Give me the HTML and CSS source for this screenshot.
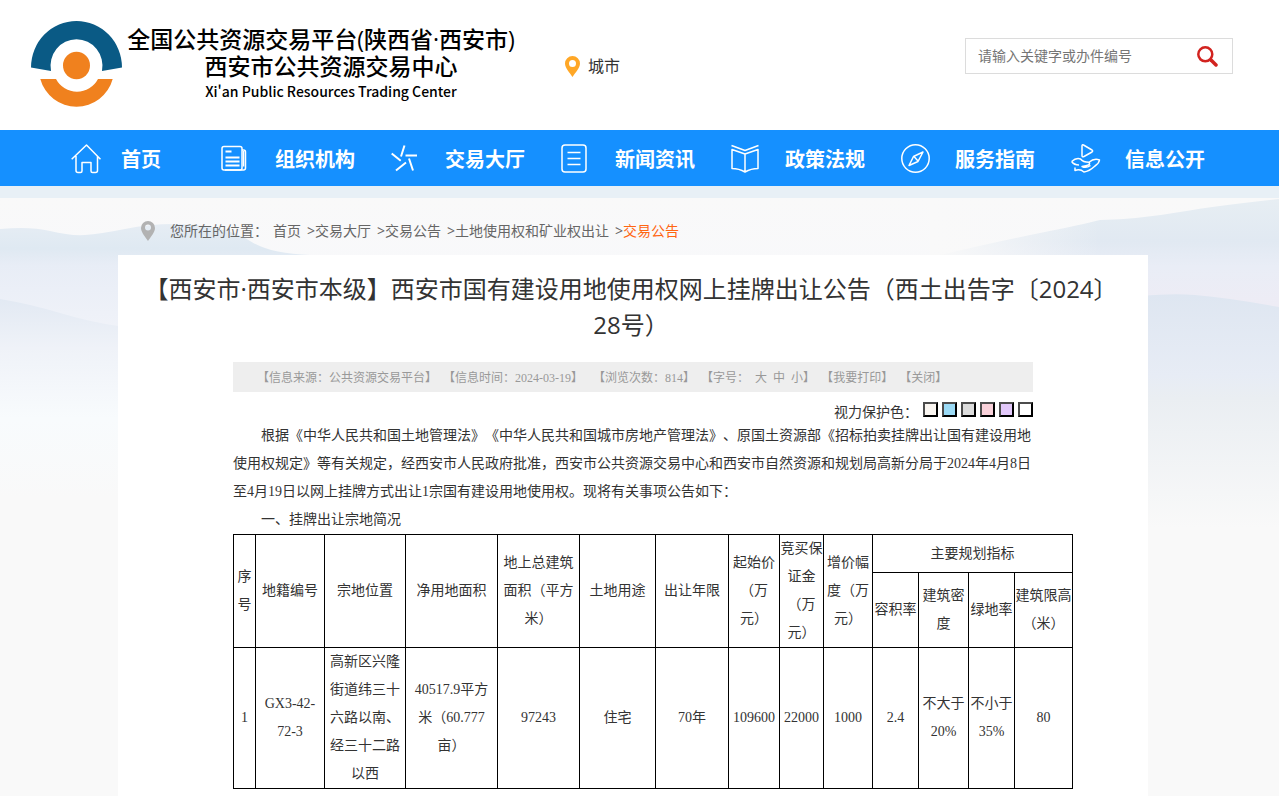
FILE: index.html
```html
<!DOCTYPE html>
<html lang="zh-CN">
<head>
<meta charset="utf-8">
<meta name="viewport" content="width=device-width, initial-scale=1">
<title>西安市公共资源交易中心</title>
<link rel="stylesheet" href="styles.css">
</head>
<body>
<header class="header">
  <div class="brand">
    <svg class="brand-mark" width="91" height="86" viewBox="0 0 91 86" aria-hidden="true">
      <path fill="#0a5a85" d="M0 46.500A45.500 46.500 0 0 1 91 46.500L71 50A26 26.500 0 1 0 20 50Z"/>
      <ellipse fill="#f0811e" cx="45.500" cy="44.500" rx="13.500" ry="13.700"/>
      <path fill="#f0811e" d="M9.300 58H25A23.700 23.700 0 0 0 67 58H81.700A37.500 37.500 0 0 1 9.300 58Z"/>
    </svg>
    <div class="brand-text">
      <div class="brand-platform">全国公共资源交易平台(陕西省·西安市)</div>
      <div class="brand-center">西安市公共资源交易中心</div>
      <div class="brand-en">Xi'an Public Resources Trading Center</div>
    </div>
  </div>
  <a class="city" href="#">
    <svg width="15" height="21" viewBox="0 0 15 21" aria-hidden="true"><path fill="#ffa726" fill-rule="evenodd" d="M7.500 0A7.500 7.500 0 0 0 0 7.500C0 12 5 17 7.500 21C10 17 15 12 15 7.500A7.500 7.500 0 0 0 7.500 0ZM7.500 4a3.500 3.500 0 1 1 0 7a3.500 3.500 0 0 1 0-7Z"/></svg>
    <span>城市</span>
  </a>
  <form class="search">
    <input class="search-input" type="text" aria-label="搜索" placeholder="请输入关键字或办件编号">
    <button class="search-button" type="button" aria-label="搜索">
      <svg width="21" height="21" viewBox="0 0 21 21" fill="none" stroke="#d2231f" aria-hidden="true"><circle cx="8.300" cy="8.300" r="7" stroke-width="2.500"/><path stroke-width="3.500" stroke-linecap="round" d="M14 14l5 5"/></svg>
    </button>
  </form>
</header>

<nav class="nav">
  <a class="nav-item nav-home" href="#">
    <svg class="nav-icon" viewBox="0 0 30 30"><path d="M.700 15.300L15.500 1L29.500 15.300M5 12v14.500q0 2 2 2h2.500q1.500 0 1.500-1.500v-8.500h9v8.500q0 1.500 1.500 1.500h3q2 0 2-2V12"/></svg>
    <span>首页</span>
  </a>
  <a class="nav-item" href="#">
    <svg class="nav-icon" viewBox="0 0 30 30"><rect x="1" y="2.500" width="20" height="23.500" rx="2"/><path d="M21 6h1.500q2 0 2 2V24q0 2-2 2H4M22.500 7v15.500"/><path stroke-width="2" d="M4.500 7.500h6M4.500 13.500h14M4.500 17.500h14M4.500 21.500h14"/></svg>
    <span>组织机构</span>
  </a>
  <a class="nav-item" href="#">
    <svg class="nav-icon" viewBox="0 0 30 30"><path stroke-width="2" d="M13.500 1.500L10 12.500M.700 9.500l9 7.300M14.500 11.500H26M15 18.500L5 26.500M18 14.500l4 12"/></svg>
    <span>交易大厅</span>
  </a>
  <a class="nav-item" href="#">
    <svg class="nav-icon" viewBox="0 0 30 30"><rect x="1" y="1" width="24" height="27" rx="3"/><path d="M6.500 8.500h13M6.500 14.500h13M6.500 20.500h13"/></svg>
    <span>新闻资讯</span>
  </a>
  <a class="nav-item" href="#">
    <svg class="nav-icon" viewBox="0 0 30 30"><path d="M.500 1.500L14 6.500L27.500 1.500M1 5.500L14 10L27 5.500V24.500Q20 24.500 14 28Q8 24.500 1 24.500ZM14 10V28"/></svg>
    <span>政策法规</span>
  </a>
  <a class="nav-item" href="#">
    <svg class="nav-icon" viewBox="0 0 30 30"><circle cx="14.500" cy="14.500" r="13.700"/><path d="M22 8L17 17.500L8 21.500L12.500 12.500ZM13 12.500l4 4.500"/></svg>
    <span>服务指南</span>
  </a>
  <a class="nav-item" href="#">
    <svg class="nav-icon" viewBox="0 0 30 30"><path d="M11 2q0-1.700 1.500-1l8.500 5q1.300 1 0 2l-8 4.500q-2 1-2-1ZM.700 17.500Q5 13.500 9.500 15Q12 18.300 18 18.300Q23 14 28.500 16Q28 19.500 24 22Q18 27.500 13 28Q9 24.500 4 26.500V23.500M.700 17.500Q3 21 8 21M18 18.300Q20.500 21.500 11 22.500Q15 24.500 19.500 21.500"/></svg>
    <span>信息公开</span>
  </a>
</nav>

<main class="main">
  <svg class="scenery" viewBox="0 0 1279 340" preserveAspectRatio="none" aria-hidden="true">
    <defs>
      <linearGradient id="sky" x2="0" y2="1"><stop offset="0" stop-color="#f9f9f9"/><stop offset=".4" stop-color="#f7f8fc"/><stop offset="1" stop-color="#f9f9f9"/></linearGradient>
      <linearGradient id="far-left" gradientUnits="userSpaceOnUse" x1="0" y1="25" x2="0" y2="310"><stop offset="0" stop-color="#e6edf4"/><stop offset=".09" stop-color="#dfe9f2"/><stop offset=".15" stop-color="#e8edf6"/><stop offset=".4" stop-color="#f1f3f9"/><stop offset=".7" stop-color="#f8fafd"/><stop offset="1" stop-color="#f9f9f9"/></linearGradient>
      <linearGradient id="far-right" gradientUnits="userSpaceOnUse" x1="0" y1="0" x2="0" y2="310"><stop offset="0" stop-color="#e7eef3"/><stop offset=".14" stop-color="#e1e9f2"/><stop offset=".22" stop-color="#e9edf6"/><stop offset=".35" stop-color="#eeecf5"/><stop offset=".7" stop-color="#f8fafd"/><stop offset="1" stop-color="#f9f9f9"/></linearGradient>
      <linearGradient id="near-left" gradientUnits="userSpaceOnUse" x1="0" y1="100" x2="0" y2="300"><stop offset="0" stop-color="#e2e9f3"/><stop offset=".25" stop-color="#eff2f8"/><stop offset=".6" stop-color="#f8fbfd"/><stop offset="1" stop-color="#f9f9f9"/></linearGradient>
      <linearGradient id="near-right" gradientUnits="userSpaceOnUse" x1="0" y1="95" x2="0" y2="330"><stop offset="0" stop-color="#dee6f1"/><stop offset=".35" stop-color="#e7ecf5"/><stop offset=".45" stop-color="#eaeef2"/><stop offset="1" stop-color="#f9f9f9"/></linearGradient>
      <linearGradient id="haze"><stop offset="0" stop-color="#f9f9f9"/><stop offset="1" stop-color="#f9f9f9" stop-opacity="0"/></linearGradient>
    </defs>
    <path fill="url(#sky)" d="M0 0H1279V340H0Z"/>
    <path fill="url(#far-left)" d="M0 31Q30 28 50 33T85 37T125 31Q160 24 195 27T250 43T310 57V340H0Z"/>
    <path fill="url(#far-right)" d="M940 57Q1000 43 1040 35T1100 22Q1140 21 1180 14T1279 1V340H940Z"/>
    <path fill="url(#haze)" d="M930 0H1100V57H930Z"/>
    <path fill="url(#near-left)" d="M0 101Q30 106 60 115T118 128L240 145V340H0Z"/>
    <path fill="url(#near-right)" d="M1100 103Q1160 94 1195 97T1279 109V340H1100Z"/>
  </svg>
  <div class="breadcrumb">
    <svg width="14" height="20" viewBox="0 0 14 20" aria-hidden="true"><path fill="#b2b2b2" fill-rule="evenodd" d="M7 0A7 7 0 0 0 0 7C0 11.500 4.500 16 7 20C9.500 16 14 11.500 14 7A7 7 0 0 0 7 0ZM7 3.500a3 3 0 1 1 0 6a3 3 0 0 1 0-6Z"/></svg>
    <span class="crumb-label">您所在的位置：</span>
    <a href="#">首页</a><span class="crumb-sep">&gt;</span><a href="#">交易大厅</a><span class="crumb-sep">&gt;</span><a href="#">交易公告</a><span class="crumb-sep">&gt;</span><a href="#">土地使用权和矿业权出让</a><span class="crumb-sep">&gt;</span><a class="crumb-current" href="#">交易公告</a>
  </div>
  <article class="panel">
    <h1 class="title">【西安市·西安市本级】西安市国有建设用地使用权网上挂牌出让公告（西土出告字〔2024〕28号）</h1>
    <div class="article">
      <div class="meta">
        <span>【信息来源：公共资源交易平台】</span>
        <span class="meta-date">【信息时间：2024-03-19】</span>
        <span>【浏览次数：814】</span>
        <span class="meta-size"><span>【字号：</span><a href="#">大</a><a href="#">中</a><span><a href="#">小</a>】</span></span>
        <span>【<a href="#">我要打印</a>】</span>
        <span>【<a href="#">关闭</a>】</span>
      </div>
      <div class="eyecare">
        <span class="eyecare-label">视力保护色：</span>
        <button class="swatch swatch-cream" type="button" aria-label="米色"></button>
        <button class="swatch swatch-blue" type="button" aria-label="蓝色"></button>
        <button class="swatch swatch-grey" type="button" aria-label="灰色"></button>
        <button class="swatch swatch-pink" type="button" aria-label="粉色"></button>
        <button class="swatch swatch-violet" type="button" aria-label="紫色"></button>
        <button class="swatch swatch-white" type="button" aria-label="白色"></button>
      </div>
      <div class="content">
        <p>根据《中华人民共和国土地管理法》《中华人民共和国城市房地产管理法》、原国土资源部《招标拍卖挂牌出让国有建设用地使用权规定》等有关规定，经西安市人民政府批准，西安市公共资源交易中心和西安市自然资源和规划局高新分局于2024年4月8日至4月19日以网上挂牌方式出让1宗国有建设用地使用权。现将有关事项公告如下：</p>
        <p>一、挂牌出让宗地简况</p>
        <table class="land">
          <colgroup>
            <col class="c-index"><col class="c-code"><col class="c-place"><col class="c-area"><col class="c-floor"><col class="c-use"><col class="c-years"><col class="c-price"><col class="c-deposit"><col class="c-step"><col class="c-ratio"><col class="c-density"><col class="c-green"><col class="c-height">
          </colgroup>
          <thead>
            <tr class="row-group">
              <th rowspan="2">序号</th><th rowspan="2">地籍编号</th><th rowspan="2">宗地位置</th><th rowspan="2">净用地面积</th><th rowspan="2">地上总建筑面积（平方米）</th><th rowspan="2">土地用途</th><th rowspan="2">出让年限</th><th rowspan="2">起始价（万元）</th><th rowspan="2">竞买保证金（万元）</th><th rowspan="2">增价幅度（万元）</th><th colspan="4">主要规划指标</th>
            </tr>
            <tr class="row-sub"><th>容积率</th><th>建筑密度</th><th>绿地率</th><th>建筑限高（米）</th></tr>
          </thead>
          <tbody>
            <tr><td>1</td><td>GX3-42-72-3</td><td>高新区兴隆街道纬三十六路以南、经三十二路以西</td><td class="cell-area">40517.9平方米（60.777亩）</td><td>97243</td><td>住宅</td><td>70年</td><td>109600</td><td>22000</td><td>1000</td><td>2.4</td><td>不大于20%</td><td>不小于35%</td><td>80</td></tr>
          </tbody>
        </table>
      </div>
    </div>
  </article>
</main>
</body>
</html>
```
FILE: styles.css
```css
* { box-sizing: border-box; }

body {
  margin: 0;
  min-height: 100vh;
  display: flex;
  flex-direction: column;
  background: #f9f9f9;
  color: #333;
  font: 14px/20px "Open Sans", "Noto Sans CJK SC", sans-serif;
  text-spacing-trim: space-all;
}

a { color: inherit; text-decoration: none; }

.header {
  display: flex;
  align-items: flex-start;
  height: 130px;
  padding: 0 46px 0 31px;
  background: #fff;
}

.brand { display: flex; gap: 5px; width: 534px; padding-top: 21px; }
.brand-mark { flex: none; }
.brand-text {
  padding-top: 5px;
  width: 388px;
  color: #000;
  font-family: "Open Sans", "Noto Sans CJK SC", sans-serif;
  font-weight: 500;
  text-align: center;
  white-space: nowrap;
}
.brand-platform { font-size: 23px; line-height: 27px; }
.brand-center { font-size: 23px; line-height: 27px; padding-left: 20px; }
.brand-en {
  padding-left: 20px;
  font-family: "Noto Sans CJK SC", sans-serif;
  font-size: 14px;
  line-height: 22px;
}

.city {
  display: flex;
  align-items: center;
  gap: 8px;
  padding-top: 56px;
  font-size: 16px;
  line-height: 21px;
}

.search {
  display: flex;
  align-items: center;
  width: 268px;
  height: 36px;
  margin: 38px 0 0 auto;
  border: 1px solid #dcdcdc;
  background: #fff;
}
.search-input {
  flex: 1;
  min-width: 0;
  height: 34px;
  padding: 0 12px 2px;
  border: 0;
  outline: 0;
  background: none;
  color: #333;
  font: inherit;
}
.search-input::placeholder { color: #757575; }
.search-button {
  display: flex;
  padding: 0 14px 0 0;
  border: 0;
  background: none;
}

.nav {
  display: flex;
  height: 56px;
  padding-left: 71px;
  background: #1590ff;
  color: #fff;
  font-size: 20px;
  font-weight: 700;
  line-height: 28px;
}
.nav-item {
  display: flex;
  align-items: center;
  flex: 0 0 170px;
  gap: 24px;
  padding-top: 1px;
  white-space: nowrap;
}
.nav-item span { padding-top: 2px; }
.nav-home { flex-basis: 150px; gap: 20px; }
.nav-icon {
  flex: none;
  width: 30px;
  height: 30px;
  fill: none;
  stroke: #fff;
  stroke-width: 1.5;
  stroke-linejoin: round;
}

.main {
  position: relative;
  display: flex;
  flex-direction: column;
  align-items: center;
  flex: 1;
  padding-right: 13px;
  border-top: 12px solid #e8f0f6;
}
.scenery {
  position: absolute;
  inset: 0 0 auto 0;
  z-index: -1;
  width: 100%;
  height: 340px;
}

.breadcrumb {
  display: flex;
  width: 1030px;
  padding: 23px 23px 14px;
  color: #666;
}
.crumb-label { margin: 0 5px 0 15px; }
.crumb-sep { padding-left: 6px; }
.crumb-current { color: #ff6612; }

.panel {
  flex: 1;
  width: 1030px;
  padding: 16px 0 7px;
  background: #fff;
}
.title {
  margin: 0;
  padding: 0 27px 0 23px;
  font-size: 24px;
  font-weight: 400;
  line-height: 36px;
  text-align: center;
}
.article { width: 800px; margin: 19px auto 0; }

.meta {
  display: flex;
  gap: 6px;
  height: 30px;
  padding: 1px 24px 0;
  background: #eee;
  color: #999;
  font: 12px/30px "Liberation Serif", "Noto Sans CJK SC", serif;
  white-space: nowrap;
}
.meta-date { min-width: 144px; }
.meta-size { display: flex; gap: 6px; }

.eyecare {
  display: flex;
  align-items: center;
  justify-content: flex-end;
  gap: 4px;
  height: 30px;
  padding-top: 5px;
}
.eyecare-label { padding: 5px 1px 0 0; }
.swatch {
  width: 15px;
  height: 15px;
  padding: 0;
  border: 2px solid;
  border-color: #4c4c4c #000 #000 #4c4c4c;
}
.swatch-cream { background: #faf6f1; }
.swatch-blue { background: #9bdaf5; }
.swatch-grey { background: #dcdcdc; }
.swatch-pink { background: #f9d1da; }
.swatch-violet { background: #e2c8fa; }
.swatch-white { background: #fff; }

.content {
  font: 14px/28px "Liberation Serif", "Noto Sans CJK SC", serif;
}
.content p { margin: 0; text-indent: 28px; }

.land {
  width: 840px;
  border-collapse: collapse;
  table-layout: fixed;
  text-align: center;
}
.land th, .land td {
  padding: 0;
  border: 1px solid #000;
  font-weight: 400;
  vertical-align: middle;
}
.land .cell-area { padding: 0 5px; }
.row-group { height: 38px; }
.row-sub { height: 75px; }
.c-index { width: 22px; }
.c-code { width: 69px; }
.c-place { width: 81px; }
.c-area { width: 92px; }
.c-floor { width: 82px; }
.c-use { width: 76px; }
.c-years { width: 73px; }
.c-price { width: 51px; }
.c-deposit { width: 44px; }
.c-step { width: 49px; }
.c-ratio { width: 46px; }
.c-density { width: 50px; }
.c-green { width: 46px; }
.c-height { width: 58px; }
```
